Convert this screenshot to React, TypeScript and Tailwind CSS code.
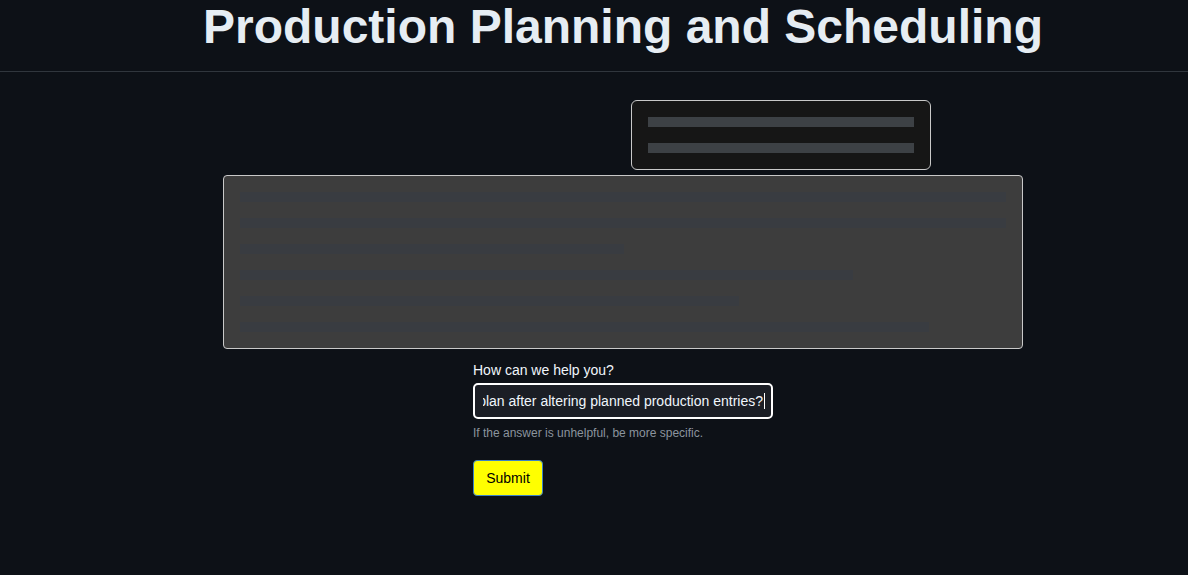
import React from 'react';

const answerBars = ['w-[766px]', 'w-[766px]', 'w-[384px]', 'w-[613px]', 'w-[499px]', 'w-[689px]'];

export default function App() {
  return (
    <div className="min-h-[575px] bg-[#0d1117] font-['Liberation_Sans',Arial,sans-serif] text-[#e6edf3]">
      <header className="h-[72px] border-b border-[#30363d] pl-[58px]">
        <h1 className="pt-[3px] text-center text-[48px] font-bold leading-[48px] text-[#e6edf3]">
          Production Planning and Scheduling
        </h1>
      </header>

      <main className="pl-[58px]">
        <div className="mx-auto w-[800px] pt-[28px]">
          {/* question bubble */}
          <div className="ml-[408px] flex h-[70px] w-[300px] flex-col gap-[16px] rounded-[6px] border border-[#c9c9c9] bg-[#161616] px-[16px] pt-[16px]">
            <div className="h-[10px] w-full bg-[#3d4145]" />
            <div className="h-[10px] w-full bg-[#3d4145]" />
          </div>

          {/* answer */}
          <div className="mt-[5px] flex h-[174px] flex-col gap-[16px] rounded-[4px] border border-[#c9c9c9] bg-[#3d3d3d] px-[16px] pt-[16px]">
            {answerBars.map((w, i) => (
              <div key={i} className={`h-[10px] bg-[#393c41] ${w}`} />
            ))}
          </div>

          {/* form */}
          <form className="mx-auto mt-[12px] w-[300px]" onSubmit={(e) => e.preventDefault()}>
            <label className="block text-[14px] leading-[18px] text-[#f0f6fc]">How can we help you?</label>
            <div className="mt-[4px] flex h-[36px] items-center rounded-[5px] border-2 border-white bg-[#1b1e25] pl-[8px] pr-[6px] text-[14px] text-[#f0f6fc]">
              <div className="flex min-w-0 flex-1 items-center justify-end overflow-hidden whitespace-nowrap">
                <span>How do I update the production plan after altering planned production entries?</span>
                <span className="ml-[1px] inline-block h-[16px] w-px shrink-0 bg-white" />
              </div>
            </div>
            <p className="mt-[7px] text-[12px] leading-[14px] text-[#8b949e]">If the answer is unhelpful, be more specific.</p>
            <button
              type="submit"
              className="mt-[20px] h-[36px] w-[70px] rounded-[4px] border border-[#3b82c4] bg-[#ffff00] text-[14px] text-black"
            >
              Submit
            </button>
          </form>
        </div>
      </main>
    </div>
  );
}
